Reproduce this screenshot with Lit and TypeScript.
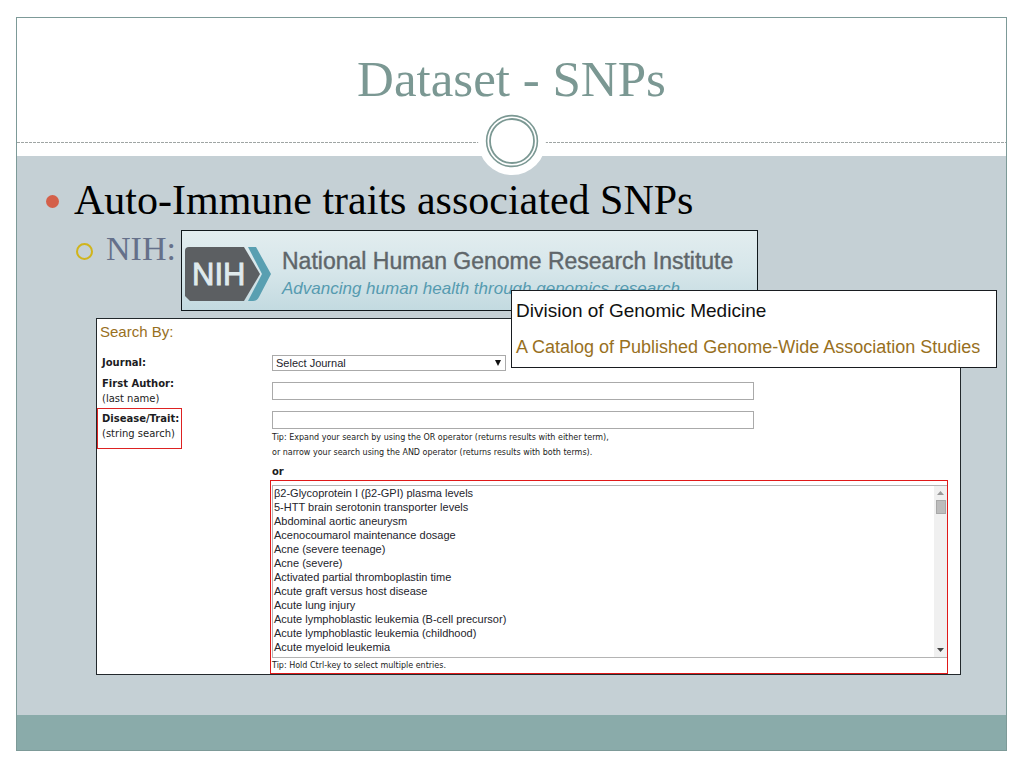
import { LitElement, html, css } from "lit";
import { customElement } from "lit/decorators.js";

const TRAITS = [
  "β2-Glycoprotein I (β2-GPI) plasma levels",
  "5-HTT brain serotonin transporter levels",
  "Abdominal aortic aneurysm",
  "Acenocoumarol maintenance dosage",
  "Acne (severe teenage)",
  "Acne (severe)",
  "Activated partial thromboplastin time",
  "Acute graft versus host disease",
  "Acute lung injury",
  "Acute lymphoblastic leukemia (B-cell precursor)",
  "Acute lymphoblastic leukemia (childhood)",
  "Acute myeloid leukemia",
];

@customElement("nih-banner")
class NihBanner extends LitElement {
  static styles = css`
    :host {
      display: flex;
      align-items: center;
      box-sizing: border-box;
      height: 81px;
      padding: 7px 0 0 3px;
      border: 1px solid #10181c;
      background: linear-gradient(#e2edef, #d6e6ea 50%, #c3dae0);
      font-family: "Liberation Sans", Arial, sans-serif;
      white-space: nowrap;
      overflow: hidden;
    }
    .logo {
      flex: none;
      display: block;
      width: 86px;
      height: 54px;
      margin-right: 11px;
    }
    .name {
      margin: 0;
      padding-top: 2px;
      font-size: 23px;
      line-height: 28px;
      color: #5f666a;
      -webkit-text-stroke: 0.4px #5f666a;
    }
    .tagline {
      margin: 0;
      font-size: 17px;
      line-height: 28px;
      font-style: italic;
      color: #569bb0;
    }
    .mark {
      font-size: 31px;
    }
  `;

  render() {
    return html`
      <svg class="logo" viewBox="0 0 86 54" aria-hidden="true">
        <path d="M4 0H59L75 27L59 54H5L0 49V4Q0 0 4 0Z" fill="#5c5f62" />
        <path d="M63 0H71L86 27L74 50Q72 54 68 54H63L77 27Z" fill="#599fb1" />
        <text class="mark" x="7" y="38" fill="#dfeaed" stroke="#dfeaed" stroke-width="0.9">NIH</text>
      </svg>
      <div>
        <p class="name">National Human Genome Research Institute</p>
        <p class="tagline">Advancing human health through genomics research</p>
      </div>
    `;
  }
}

@customElement("trait-search")
class TraitSearch extends LitElement {
  static styles = css`
    :host {
      display: block;
      background: #fff;
      border: 1px solid #22282c;
      font-family: "DejaVu Sans", Verdana, sans-serif;
      color: #1c1c22;
    }
    .heading {
      margin: 0;
      padding: 3px 0 13px 3px;
      font: 15px/20px "Liberation Sans", Arial, sans-serif;
      color: #98701e;
    }
    .row {
      display: grid;
      grid-template-columns: 175px minmax(0, 1fr);
      align-items: start;
    }
    .label {
      display: block;
      box-sizing: border-box;
      padding-left: 5px;
      font-size: 10px;
      line-height: 15px;
    }
    .label b,
    .label span {
      display: block;
    }
    .author {
      margin-top: 5px;
    }
    .author .text {
      margin-top: 6px;
    }
    .trait {
      margin-top: 2px;
    }
    .trait .text {
      margin-top: 3px;
    }
    .marked {
      width: 85px;
      padding: 2px 0 7px 4px;
      border: 1px solid #d22;
      white-space: nowrap;
    }
    .text {
      display: block;
      box-sizing: border-box;
      width: 70%;
      height: 18px;
      padding: 0 3px;
      border: 1px solid #aaa;
      border-radius: 0;
      background: #fff;
    }
    .journal {
      position: relative;
      width: 34%;
    }
    .journal select {
      appearance: none;
      display: block;
      box-sizing: border-box;
      width: 100%;
      height: 16px;
      padding: 0 3px;
      border: 1px solid #aaa;
      border-radius: 0;
      background: #fff;
      color: #24242c;
      font: 11px/14px "Liberation Sans", Arial, sans-serif;
    }
    .journal svg {
      position: absolute;
      right: 5px;
      top: 5px;
      width: 6px;
      height: 6px;
      pointer-events: none;
    }
    .tip {
      margin: 0;
      font-size: 8px;
      line-height: 15px;
    }
    .text + .tip {
      margin-top: 1px;
    }
    .or {
      margin: 4px 0 1px;
      font-size: 10px;
      line-height: 15px;
      font-weight: bold;
    }
    .choices {
      margin: 0 12px 0 -2px;
      padding: 4px 0 0 1px;
      border: 1px solid #e01818;
    }
    .list {
      display: flex;
      height: 173px;
      box-sizing: border-box;
      border: 1px solid #b4b4b4;
      border-right: 0;
    }
    .list select {
      flex: 1;
      min-width: 0;
      box-sizing: border-box;
      height: 171px;
      margin: 0;
      padding: 1px 0 0;
      border: 0;
      border-radius: 0;
      outline: 0;
      overflow: hidden;
      background: #fff;
      color: #24242c;
      font: 11px/14px "Liberation Sans", Arial, sans-serif;
    }
    .list option {
      box-sizing: border-box;
      height: 14px;
      min-height: 14px;
      padding: 0 1px;
      line-height: 14px;
      color: #24242c;
    }
    .bar {
      flex: none;
      display: flex;
      flex-direction: column;
      align-items: center;
      width: 13px;
      background: #f0f0f0;
    }
    .bar svg {
      display: block;
      width: 7px;
      height: 4px;
      margin: 5px 0;
    }
    .thumb {
      width: 10px;
      height: 14px;
      box-sizing: border-box;
      border: 1px solid #a8a8a8;
      background: #bcbcbc;
    }
    .space {
      flex: 1;
    }
  `;

  render() {
    return html`
      <form>
        <h3 class="heading">Search By:</h3>
        <div class="row">
          <label class="label" for="journal"><b>Journal:</b></label>
          <div class="journal">
            <select id="journal">
              <option>Select Journal</option>
            </select>
            <svg viewBox="0 0 6 6" aria-hidden="true"><path d="M0 0H6L3 6Z" fill="#111" /></svg>
          </div>
        </div>
        <div class="row author">
          <label class="label" for="author"><b>First Author:</b><span>(last name)</span></label>
          <input class="text" id="author" type="text" />
        </div>
        <div class="row trait">
          <label class="label marked" for="trait"><b>Disease/Trait:</b><span>(string search)</span></label>
          <div>
            <input class="text" id="trait" type="text" />
            <p class="tip">Tip: Expand your search by using the OR operator (returns results with either term),</p>
            <p class="tip">or narrow your search using the AND operator (returns results with both terms).</p>
            <p class="or">or</p>
            <div class="choices">
              <div class="list">
                <select multiple size="12" aria-label="Disease/Trait">
                  ${TRAITS.map((t) => html`<option>${t}</option>`)}
                </select>
                <div class="bar" aria-hidden="true">
                  <svg viewBox="0 0 7 4"><path d="M0 4L3.5 0L7 4Z" fill="#999" /></svg>
                  <div class="thumb"></div>
                  <div class="space"></div>
                  <svg viewBox="0 0 7 4"><path d="M0 0L3.5 4L7 0Z" fill="#444" /></svg>
                </div>
              </div>
              <p class="tip">Tip: Hold Ctrl-key to select multiple entries.</p>
            </div>
          </div>
        </div>
      </form>
    `;
  }
}

@customElement("app-root")
class AppRoot extends LitElement {
  static styles = css`
    :host {
      display: block;
      box-sizing: border-box;
      min-height: 100vh;
      padding: 17px 17px 17px 16px;
      background: #fff;
      font-family: Georgia, "Liberation Serif", serif;
    }
    .slide {
      border: 1px solid #7d9a98;
      background: #c5d0d5;
    }
    .header {
      padding: 32px 0 13px;
      background: #fff;
    }
    .title {
      margin: 0 0 34px;
      font-size: 51px;
      line-height: 58px;
      font-weight: normal;
      text-align: center;
      color: #7b9893;
    }
    .rule {
      position: relative;
      height: 1px;
      background: repeating-linear-gradient(90deg, #9fa5a4 0 3px, #fff 3px 4px);
    }
    .ring {
      position: absolute;
      left: calc(50% - 35px);
      top: -36px;
      width: 70px;
      height: 70px;
    }
    .body {
      padding: 19px 9px 40px 29px;
    }
    .point {
      display: flex;
      align-items: center;
      margin: 0;
      font-size: 42px;
      line-height: 50px;
      font-weight: normal;
      color: #000;
    }
    .dot {
      flex: none;
      width: 13px;
      height: 13px;
      margin: 2px 15px 0 0;
      border-radius: 50%;
      background: #d4604a;
    }
    .sub {
      display: flex;
      align-items: flex-start;
      padding-left: 30px;
    }
    .circle {
      flex: none;
      box-sizing: border-box;
      width: 17px;
      height: 17px;
      margin: 18px 13px 0 0;
      border: 2px solid #d0b41c;
      border-radius: 50%;
    }
    .source {
      flex: none;
      width: 75px;
      margin: 4px 0 0;
      font-size: 34px;
      line-height: 40px;
      color: #65708a;
    }
    nih-banner {
      flex: 0 1 577px;
      min-width: 0;
      margin-top: 5px;
    }
    .search {
      position: relative;
      margin: 7px 36px 0 50px;
    }
    .catalog {
      position: absolute;
      top: -28px;
      right: -36px;
      box-sizing: border-box;
      width: 486px;
      height: 78px;
      padding: 6px 4px;
      border: 1px solid #181c20;
      background: #fff;
      font-family: "Liberation Sans", Arial, sans-serif;
      white-space: nowrap;
    }
    .division {
      margin: 0 0 8px;
      font-size: 19px;
      line-height: 28px;
      color: #111;
    }
    .studies {
      margin: 0;
      font-size: 18px;
      line-height: 28px;
      color: #98701e;
    }
    .footer {
      height: 35px;
      background: #8aabaa;
    }
  `;

  render() {
    return html`
      <main class="slide">
        <header class="header">
          <h1 class="title">Dataset - SNPs</h1>
          <div class="rule">
            <svg class="ring" viewBox="0 0 70 70" aria-hidden="true">
              <circle cx="35" cy="35" r="34" fill="#fff" />
              <circle cx="35" cy="35" r="25.4" fill="none" stroke="#7b9893" stroke-width="1.6" />
              <circle cx="35" cy="35" r="22" fill="none" stroke="#7b9893" stroke-width="1.8" />
            </svg>
          </div>
        </header>
        <section class="body">
          <h2 class="point"><span class="dot"></span>Auto-Immune traits associated SNPs</h2>
          <div class="sub">
            <span class="circle"></span>
            <p class="source">NIH:</p>
            <nih-banner></nih-banner>
          </div>
          <div class="search">
            <trait-search></trait-search>
            <div class="catalog">
              <p class="division">Division of Genomic Medicine</p>
              <p class="studies">A Catalog of Published Genome-Wide Association Studies</p>
            </div>
          </div>
        </section>
        <footer class="footer"></footer>
      </main>
    `;
  }
}
